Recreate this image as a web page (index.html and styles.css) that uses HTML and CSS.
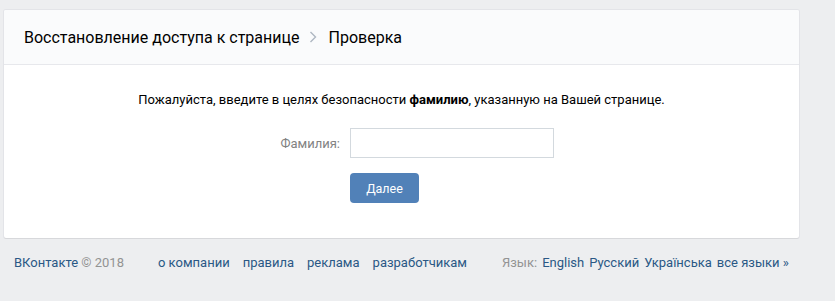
FILE: index.html
```html
<!DOCTYPE html>
<html lang="ru">
<head>
<meta charset="utf-8">
<title>Восстановление доступа к странице</title>
<link rel="stylesheet" href="styles.css">
</head>
<body>
<div class="page">
  <div class="card">
    <div class="card-header">
      <span class="crumb">Восстановление доступа к странице</span>
      <svg class="sep" width="8" height="12" viewBox="0 0 8 12"><path d="M1.5 1 L6.5 6 L1.5 11" fill="none" stroke="#aeb7c2" stroke-width="1.4"/></svg>
      <span class="crumb">Проверка</span>
    </div>
    <div class="card-body">
      <p class="intro">Пожалуйста, введите в целях безопасности <b>фамилию</b>, указанную на Вашей странице.</p>
      <div class="form-row">
        <label class="label" for="ln">Фамилия:</label>
        <input class="field" id="ln" type="text">
      </div>
      <div class="form-row">
        <span class="label"></span>
        <button class="btn" type="button">Далее</button>
      </div>
    </div>
  </div>
  <div class="footer">
    <div class="copy"><a class="link" href="#">ВКонтакте</a> © 2018</div>
    <div class="links">
      <a class="link" href="#">о компании</a>
      <a class="link" href="#">правила</a>
      <a class="link" href="#">реклама</a>
      <a class="link" href="#">разработчикам</a>
    </div>
    <div class="lang">
      <span class="lang-label">Язык:</span>
      <a class="link" href="#">English</a>
      <a class="link" href="#">Русский</a>
      <a class="link" href="#">Українська</a>
      <a class="link all" href="#">все языки »</a>
    </div>
  </div>
</div>
</body>
</html>
```
FILE: styles.css
```css
html, body {
  margin: 0;
  padding: 0;
  background: #edeef0;
  font-family: Roboto, "Open Sans", "DejaVu Sans", sans-serif;
  font-size: 13px;
  color: #000;
}
.page {
  width: 795px;
  padding: 10px 0 0 4px;
}
.card {
  background: #fff;
  border-radius: 2px;
  box-shadow: 0 1px 0 0 #d7d8db, 0 0 0 1px #e3e4e8;
  overflow: hidden;
}
.card-header {
  height: 55px;
  box-sizing: border-box;
  border-bottom: 1px solid #e7e8ec;
  background: #fafbfc;
  display: flex;
  align-items: center;
  padding: 0 20px;
  font-size: 16px;
  color: #000;
}
.sep {
  margin: 0 11px 0 10px;
}
.card-body {
  padding: 26px 0 35px;
}
.intro {
  margin: 0 0 19px;
  text-align: center;
  line-height: 18px;
}
.intro b {
  font-weight: 700;
}
.form-row {
  display: flex;
  align-items: center;
  margin-bottom: 15px;
}
.form-row:last-child {
  margin-bottom: 0;
}
.label {
  width: 346px;
  box-sizing: border-box;
  padding-right: 10px;
  text-align: right;
  color: #828282;
}
.field {
  width: 204px;
  height: 30px;
  box-sizing: border-box;
  border: 1px solid #d3d9de;
  border-radius: 0;
  margin: 0;
  padding: 4px 8px;
  font: inherit;
  outline: none;
}
.btn {
  width: 69px;
  height: 30px;
  border: 0;
  border-radius: 4px;
  background: #5181b8;
  color: #fff;
  font: inherit;
  font-size: 12.5px;
  padding: 0;
  cursor: pointer;
}
.footer {
  display: flex;
  align-items: center;
  padding: 16px 10px;
  line-height: 18px;
  color: #939393;
  white-space: nowrap;
}
.link {
  color: #2a5885;
  text-decoration: none;
}
.copy {
  margin-right: 34px;
}
.links {
  display: flex;
  gap: 13px;
}
.lang {
  margin-left: 35px;
  display: flex;
  gap: 5px;
}
.lang-label {
  color: #939393;
}
```
